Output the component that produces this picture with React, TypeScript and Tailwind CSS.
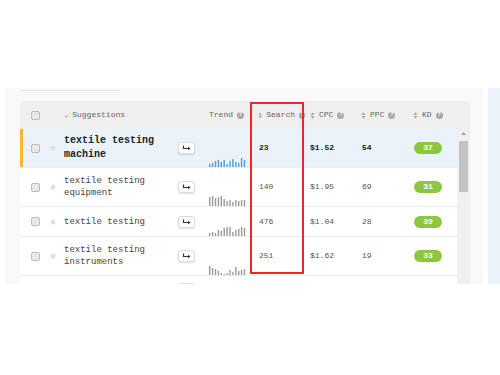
import React from 'react';

type Row = {
    keyword: string;
    search: string;
    cpc: string;
    ppc: string;
    kd: string;
    trend: number[];
    active?: boolean;
};

const ROWS: Row[] = [
    { keyword: 'textile testing machine', search: '23', cpc: '$1.52', ppc: '54', kd: '37', trend: [3, 4, 6, 7, 5, 7, 3, 6, 8, 5, 4, 9, 7], active: true },
    { keyword: 'textile testing equipment', search: '140', cpc: '$1.95', ppc: '69', kd: '31', trend: [9, 10, 8, 9, 10, 7, 5, 6, 4, 6, 5, 6, 6] },
    { keyword: 'textile testing', search: '476', cpc: '$1.04', ppc: '28', kd: '39', trend: [3, 4, 3, 6, 5, 8, 9, 9, 4, 6, 7, 9, 8] },
    { keyword: 'textile testing instruments', search: '251', cpc: '$1.62', ppc: '19', kd: '33', trend: [9, 7, 6, 4, 2, 1, 2, 5, 3, 8, 4, 5, 6] },
];

const Help = () => (
    <span className="inline-flex items-center justify-center w-[7px] h-[7px] rounded-full bg-[#a9a9a9] text-white text-[5px] font-bold leading-none ml-[4px]">?</span>
);

const Sort = () => (
    <svg width="5" height="7" viewBox="0 0 5 7" className="mr-[4px]">
        <path d="M2.5 0.5 L4.5 2.8 L0.5 2.8 Z" fill="#9a9a9a" />
        <path d="M2.5 6.5 L4.5 4.2 L0.5 4.2 Z" fill="#9a9a9a" />
    </svg>
);

const Checkbox = () => (
    <span className="block w-[9px] h-[9px] rounded-[2px] border border-[#bdbdbd] bg-[#e9e9e9]" />
);

const Star = () => (
    <svg width="8" height="8" viewBox="0 0 24 24">
        <path d="M12 2l3.1 6.3 6.9 1-5 4.9 1.2 6.9L12 17.8 5.8 21.1 7 14.2 2 9.3l6.9-1z" fill="#dedede" />
    </svg>
);

const Spark = ({ data, color }: { data: number[]; color: string }) => (
    <svg width="38" height="11" viewBox="0 0 38 11">
        {data.map((h, i) => (
            <rect key={i} x={i * 2.9} y={11 - h} width="1.4" height={h} fill={color} />
        ))}
    </svg>
);

const ArrowButton = () => (
    <span className="flex items-center justify-center w-[17px] h-[12px] rounded-[3px] bg-white border border-[#dcdcdc] shadow-[0_1px_2px_rgba(0,0,0,0.12)]">
        <svg width="9" height="6" viewBox="0 0 9 6">
            <path d="M1.5 0.5 V3.5 H7" stroke="#333" strokeWidth="1.2" fill="none" />
            <path d="M6 1.8 L8.5 3.5 L6 5.2 Z" fill="#333" />
        </svg>
    </span>
);

export default function App() {
    return (
        <div className="relative w-[500px] h-[375px] bg-white overflow-hidden" style={{ fontFamily: '"Liberation Mono", monospace' }}>
            <div className="h-[88px]" />
            <div className="flex h-[196px]">
                <div className="w-[5px] bg-white" />
                <div className="flex-1 bg-[#f9f9f9] pl-[15px] pr-[13px] overflow-hidden">
                    <div className="w-[100px] h-px bg-[#e4e4e4] mt-[2px]" />
                    <div className="mt-[10px]">
                        {/* header */}
                        <div className="flex items-center h-[28px] rounded-t-[6px] bg-[#efefef] text-[8px] text-[#666]">
                            <div className="w-[28px] pl-[11px]"><Checkbox /></div>
                            <div className="w-[16px]" />
                            <div className="w-[114px] flex items-center">
                                <span className="text-[7px] mr-[4px] text-[#999]">⌄</span>Suggestions
                            </div>
                            <div className="w-[31px]" />
                            <div className="w-[41px] flex items-center">Trend<Help /></div>
                            <div className="w-[55px] pl-[8px] flex items-center"><Sort />Search<Help /></div>
                            <div className="w-[52px] pl-[5px] flex items-center"><Sort />CPC<Help /></div>
                            <div className="w-[51px] pl-[4px] flex items-center"><Sort />PPC<Help /></div>
                            <div className="w-[49px] pl-[5px] flex items-center"><Sort />KD<Help /></div>
                        </div>
                        {/* body */}
                        <div className="flex">
                            <div className="w-[437px]">
                                {ROWS.map((r, i) => {
                                    const twoLine = r.keyword.length > 16;
                                    return (
                                        <div
                                            key={i}
                                            className={`flex items-stretch border-b border-[#ebebeb] ${twoLine ? 'h-[39px]' : 'h-[30px]'} ${r.active ? 'bg-[#eaf3fa] shadow-[inset_3px_0_0_#f5b82e]' : 'bg-white'}`}
                                        >
                                            <div className="w-[28px] pl-[11px] flex items-center"><Checkbox /></div>
                                            <div className="w-[16px] flex items-center pl-[1px]"><Star /></div>
                                            <div className={`w-[114px] flex items-center ${r.active ? 'text-[10px] font-bold text-[#222] leading-[14px]' : 'text-[9px] text-[#444] leading-[12px]'}`}>
                                                <span>{r.keyword}</span>
                                            </div>
                                            <div className="w-[31px] flex items-center"><ArrowButton /></div>
                                            <div className="w-[41px] flex items-end">
                                                <Spark data={r.trend} color={r.active ? '#4aa0da' : '#9a9a9a'} />
                                            </div>
                                            <div className={`w-[55px] pl-[9px] flex items-center text-[8px] ${r.active ? 'font-bold text-[#222]' : 'text-[#555]'}`}>{r.search}</div>
                                            <div className={`w-[52px] pl-[5px] flex items-center text-[8px] ${r.active ? 'font-bold text-[#222]' : 'text-[#555]'}`}>{r.cpc}</div>
                                            <div className={`w-[51px] pl-[5px] flex items-center text-[8px] ${r.active ? 'font-bold text-[#222]' : 'text-[#555]'}`}>{r.ppc}</div>
                                            <div className="w-[49px] pl-[6px] flex items-center">
                                                <span className="flex items-center justify-center w-[28px] h-[12px] rounded-full bg-[#8dc63f] text-white text-[8px] font-bold">{r.kd}</span>
                                            </div>
                                        </div>
                                    );
                                })}
                                {/* next row, only its top shows */}
                                <div className="flex h-[39px] bg-white">
                                    <div className="w-[158px]" />
                                    <div className="w-[31px] pt-[7px]"><ArrowButton /></div>
                                </div>
                            </div>
                            {/* scrollbar */}
                            <div className="w-[13px] bg-[#f0f0f0] flex flex-col items-center pt-[3px]">
                                <svg width="5" height="3" viewBox="0 0 5 3"><path d="M2.5 0 L5 3 L0 3 Z" fill="#a3a3a3" /></svg>
                                <div className="w-[9px] h-[51px] bg-[#c1c1c1] mt-[6px]" />
                            </div>
                        </div>
                    </div>
                </div>
                <div className="w-[5px] bg-white" />
                <div className="w-[12px] bg-[#ecf2f9]" />
            </div>
            {/* highlight box */}
            <div className="absolute left-[250px] top-[102px] w-[54px] h-[172px] border-2 border-[#e8262b]" />
        </div>
    );
}
